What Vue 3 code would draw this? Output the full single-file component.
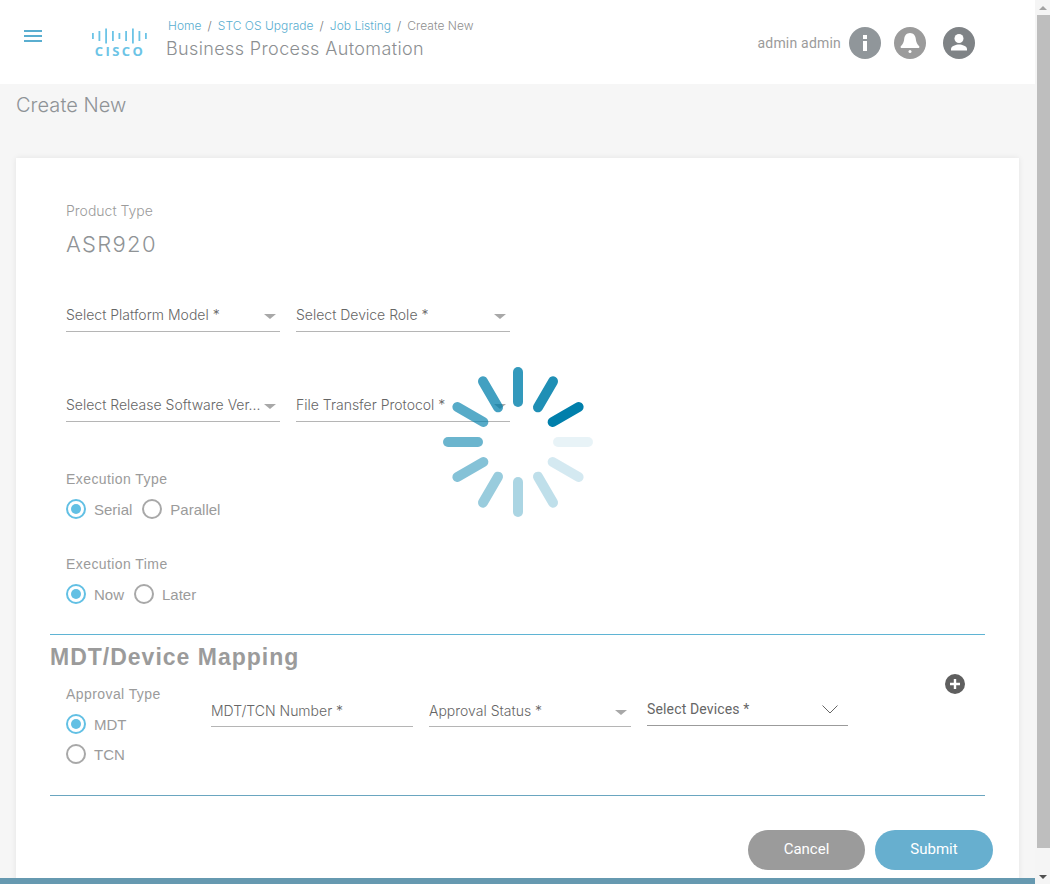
<template>
  <div class="page">
    <div class="left">
      <header class="topbar">
        <button class="menu-btn" aria-label="menu">
          <svg width="18" height="12" viewBox="0 0 18 12"><path d="M0 1h18M0 6h18M0 11h18" stroke="#5aaed0" stroke-width="2" fill="none" /></svg>
        </button>
        <div class="logo">
          <svg width="56" height="16" viewBox="0 0 56 16">
            <rect v-for="(b, i) in logoBars" :key="i" :x="b.x" :y="(16 - b.h) / 2" width="1.8" :height="b.h" fill="#6cc4e6" />
          </svg>
          <span class="logo-text">CISCO</span>
        </div>
        <div class="titles">
          <div class="crumbs">
            <template v-for="c in crumbs" :key="c">
              <a class="crumb-link">{{ c }}</a>
              <span class="crumb-sep">/</span>
            </template>
            <span class="crumb-current">Create New</span>
          </div>
          <div class="app-title">Business Process Automation</div>
        </div>
        <div class="user">
          <span class="user-name">admin admin</span>
          <svg class="ico" width="32" height="32" viewBox="0 0 32 32">
            <circle cx="16" cy="16" r="16" fill="#90969a" />
            <rect x="14" y="8" width="4" height="4" fill="#fff" />
            <rect x="14" y="14" width="4" height="10" fill="#fff" />
          </svg>
          <svg class="ico bell" width="32" height="32" viewBox="0 0 32 32">
            <circle cx="16" cy="16" r="16" fill="#9b9b9b" />
            <path d="M16 6c-3.600 0-5.600 2.800-5.800 6-.2 3-1.400 5.300-3.400 7.300-.5.600-.2 1.700.5 1.700h17.400c.7 0 1-1.100.500-1.700-2-2-3.200-4.300-3.400-7.300-.2-3.200-2.200-6-5.800-6z" fill="#fff" />
            <circle cx="16" cy="24.500" r="1.500" fill="#fff" />
          </svg>
          <svg class="ico" width="32" height="32" viewBox="0 0 32 32">
            <circle cx="16" cy="16" r="16" fill="#7f8386" />
            <circle cx="16" cy="11.500" r="4.500" fill="#fff" />
            <path d="M8 23.500v-1.500c0-3 5-4.500 8-4.500s8 1.500 8 4.500v1.500z" fill="#fff" />
          </svg>
        </div>
      </header>

      <main class="content">
        <h1 class="page-title">Create New</h1>
        <section class="card">
          <div class="label thin">Product Type</div>
          <div class="product">ASR920</div>

          <div class="select-row first">
            <div class="select"><span>Select Platform Model *</span><i class="caret"></i></div>
            <div class="select"><span>Select Device Role *</span><i class="caret"></i></div>
          </div>
          <div class="select-row second">
            <div class="select"><span>Select Release Software Ver...</span><i class="caret"></i></div>
            <div class="select"><span>File Transfer Protocol *</span><i class="caret"></i></div>
          </div>

          <div class="label exec-type">Execution Type</div>
          <div class="radios">
            <label class="radio on"><i></i>Serial</label>
            <label class="radio"><i></i>Parallel</label>
          </div>
          <div class="label exec-time">Execution Time</div>
          <div class="radios">
            <label class="radio on"><i></i>Now</label>
            <label class="radio"><i></i>Later</label>
          </div>

          <div class="mapping">
            <h2>MDT/Device Mapping</h2>
            <div class="mapping-row">
              <div class="approval">
                <div class="label">Approval Type</div>
                <label class="radio on"><i></i>MDT</label>
                <label class="radio"><i></i>TCN</label>
              </div>
              <div class="select mdt"><span>MDT/TCN Number *</span></div>
              <div class="select mdt"><span>Approval Status *</span><i class="caret"></i></div>
              <div class="select devices">
                <span>Select Devices *</span>
                <svg width="16" height="9" viewBox="0 0 16 9"><path d="M.5.500 8 8 15.500.500" fill="none" stroke="#666" /></svg>
              </div>
              <svg class="add" width="20" height="20" viewBox="0 0 20 20">
                <circle cx="10" cy="10" r="10" fill="#5f5f5f" />
                <path d="M10 5v10M5 10h10" stroke="#fff" stroke-width="2.400" />
              </svg>
            </div>
          </div>

          <div class="actions">
            <button class="btn cancel">Cancel</button>
            <button class="btn submit">Submit</button>
          </div>
        </section>
      </main>
      <div class="footer-bar"></div>
    </div>

    <div class="scrollbar">
      <i class="arrow up"></i>
      <div class="thumb"></div>
      <i class="arrow down"></i>
    </div>

    <svg class="spinner" width="150" height="150" viewBox="0 0 150 150">
      <rect
        v-for="s in spokes"
        :key="s.angle"
        x="70"
        y="0"
        width="10"
        height="40"
        rx="5"
        fill="#007fab"
        :opacity="s.opacity"
        :transform="`rotate(${s.angle} 75 75)`"
      />
    </svg>
  </div>
</template>

<script setup>
const crumbs = ['Home', 'STC OS Upgrade', 'Job Listing'];

const logoBars = [
  { x: 0, h: 6 },
  { x: 6.500, h: 10 },
  { x: 13.200, h: 15 },
  { x: 20, h: 10 },
  { x: 26.500, h: 6 },
  { x: 33.200, h: 10 },
  { x: 40, h: 15 },
  { x: 46.500, h: 10 },
  { x: 53, h: 6 },
];

// spokes fade clockwise, darkest one sits at 60deg
const spokes = [
  { angle: 0, opacity: 0.8 },
  { angle: 30, opacity: 0.88 },
  { angle: 60, opacity: 1 },
  { angle: 90, opacity: 0.09 },
  { angle: 120, opacity: 0.17 },
  { angle: 150, opacity: 0.25 },
  { angle: 180, opacity: 0.33 },
  { angle: 210, opacity: 0.4 },
  { angle: 240, opacity: 0.48 },
  { angle: 270, opacity: 0.58 },
  { angle: 300, opacity: 0.66 },
  { angle: 330, opacity: 0.74 },
];
</script>

<style>
html, body {
  margin: 0;
  height: 100%;
  overflow: hidden;
}
</style>

<style scoped>
.page {
  position: relative;
  display: flex;
  height: 884px;
  font-family: Roboto, "Liberation Sans", sans-serif;
  color: #9b9b9b;
  background: #f6f6f6;
}

.left {
  display: flex;
  flex-direction: column;
  width: 1035px;
  overflow: hidden;
}

.topbar {
  display: flex;
  flex: none;
  align-items: flex-start;
  height: 84px;
  background: #fff;
}

.menu-btn {
  display: flex;
  flex: none;
  width: 18px;
  height: 12px;
  margin: 30px 0 0 24px;
  padding: 0;
  border: 0;
  background: none;
}

.logo {
  display: flex;
  flex: none;
  flex-direction: column;
  align-items: center;
  width: 56px;
  margin: 28px 0 0 50px;
}

.logo-text {
  margin-top: 0;
  font-family: "Open Sans", sans-serif;
  font-size: 13px;
  font-weight: 700;
  line-height: 14px;
  letter-spacing: 2.400px;
  color: #6cc4e6;
}

.titles {
  margin: 17px 0 0 18px;
  font-family: Inter, sans-serif;
  font-weight: 300;
}

.crumbs {
  display: flex;
  margin-left: 2px;
  font-size: 12px;
  line-height: 18px;
  letter-spacing: 0.030px;
}

.crumb-link {
  color: #5aaed0;
}

.crumb-sep {
  margin: 0 6px;
  color: #777;
}

.crumb-current {
  color: #8f8f8f;
}

.app-title {
  margin-top: 2px;
  font-size: 18px;
  line-height: 24px;
  letter-spacing: 0.380px;
  color: #8c8f92;
}

.user {
  display: flex;
  align-items: center;
  margin: 26px 0 0 auto;
  padding-right: 60px;
}

.user-name {
  margin-right: 8px;
  font-size: 14px;
  letter-spacing: 0.200px;
}

.ico.bell {
  margin: 1px 17px 0 13px;
}

.content {
  flex: 1;
  min-height: 0;
  overflow: hidden;
  padding: 0 16px;
}

.page-title {
  margin: 8px 0 0;
  font-family: Inter, sans-serif;
  font-size: 20px;
  font-weight: 300;
  line-height: 26px;
  letter-spacing: 0.050px;
  color: #8f9396;
}

.card {
  box-sizing: border-box;
  width: 1003px;
  height: 760px;
  margin: 40px 0 0;
  padding: 44px 34px 0 34px;
  background: #fff;
  box-shadow: 0 0 6px rgba(0, 0, 0, 0.08);
}

.label {
  padding-left: 16px;
  font-family: "Liberation Sans", sans-serif;
  font-size: 14px;
  line-height: 18px;
  letter-spacing: 0.420px;
}

.label.thin {
  font-family: Inter, sans-serif;
  font-weight: 300;
  letter-spacing: 0;
}

.product {
  margin-top: 10px;
  padding-left: 16px;
  font-family: Inter, sans-serif;
  font-size: 22px;
  font-weight: 300;
  line-height: 28px;
  letter-spacing: 1.300px;
  color: #8f9396;
}

.select-row {
  display: flex;
  gap: 16px;
  padding-left: 16px;
}

.select-row.first {
  margin-top: 42px;
}

.select-row.second {
  margin-top: 58px;
}

.select {
  box-sizing: border-box;
  display: flex;
  align-items: center;
  justify-content: space-between;
  width: 214px;
  height: 32px;
  padding: 0 4px 2px 0;
  border-bottom: 1px solid #b5b5b5;
  font-family: Inter, sans-serif;
  font-size: 14px;
  font-weight: 300;
  color: #666;
}

.caret {
  flex: none;
  width: 0;
  height: 0;
  margin-top: 3px;
  border-left: 6px solid transparent;
  border-right: 6px solid transparent;
  border-top: 5px solid #a8a8a8;
}

.exec-type {
  margin-top: 48px;
}

.exec-time {
  margin-top: 36px;
}

.radios {
  display: flex;
  gap: 10px;
  margin-top: 11px;
  padding-left: 16px;
}

.radio {
  display: flex;
  align-items: center;
  gap: 8px;
  height: 20px;
  font-family: "Liberation Sans", sans-serif;
  font-size: 15px;
  color: #9b9b9b;
}

.radio i {
  position: relative;
  flex: none;
  box-sizing: border-box;
  width: 20px;
  height: 20px;
  border: 2px solid #a8a8a8;
  border-radius: 50%;
}

.radio.on i {
  border-color: #62c0e4;
}

.radio.on i::after {
  content: "";
  position: absolute;
  inset: 3px;
  border-radius: 50%;
  background: #62c0e4;
}

.mapping {
  box-sizing: border-box;
  height: 162px;
  margin-top: 30px;
  border-top: 1px solid #5fb4d4;
  border-bottom: 1px solid #6aa6c0;
}

.mapping h2 {
  margin: 8px 0 0;
  font-family: "Liberation Sans", sans-serif;
  font-size: 23px;
  font-weight: 700;
  line-height: 28px;
  letter-spacing: 1px;
  color: #9b9b9b;
}

.mapping-row {
  position: relative;
  display: flex;
  align-items: flex-start;
  margin-top: 14px;
  padding-left: 16px;
}

.approval {
  display: flex;
  flex: none;
  flex-direction: column;
  width: 145px;
}

.approval .label {
  margin-bottom: 11px;
  padding-left: 0;
}

.approval .radio + .radio {
  margin-top: 10px;
}

.select.mdt {
  width: 202px;
  margin-top: 10px;
  margin-right: 16px;
  padding-bottom: 0;
}

.select.devices {
  width: 201px;
  height: 33px;
  margin-top: 8px;
  padding: 0 10px 0 0;
  font-family: Roboto, sans-serif;
  font-weight: 400;
  letter-spacing: 0.150px;
  border-bottom-color: #9b9b9b;
}

.add {
  position: absolute;
  top: -11px;
  right: 20px;
}

.actions {
  display: flex;
  justify-content: flex-end;
  gap: 10px;
  margin: 34px -8px 0 0;
}

.btn {
  width: 117px;
  height: 40px;
  padding: 0 0 2px;
  border: 0;
  border-radius: 20px;
  font-family: Roboto, sans-serif;
  font-size: 15px;
  color: #fff;
}

.btn.cancel {
  background: #9b9b9b;
}

.btn.submit {
  width: 118px;
  background: #67afcf;
}

.footer-bar {
  flex: none;
  height: 6px;
  background: #6699b0;
}

.scrollbar {
  display: flex;
  flex: none;
  flex-direction: column;
  align-items: center;
  width: 15px;
  background: #f5f5f5;
}

.arrow {
  flex: none;
  width: 0;
  height: 0;
  margin: 6px 0 5px;
  border-left: 4px solid transparent;
  border-right: 4px solid transparent;
}

.arrow.up {
  border-bottom: 4px solid #a3a3a3;
}

.arrow.down {
  margin-top: auto;
  border-top: 4px solid #505050;
}

.thumb {
  flex: none;
  width: 13px;
  height: 833px;
  margin-left: 1px;
  background: #bebebe;
}

.spinner {
  position: absolute;
  left: 443px;
  top: 367px;
}
</style>
